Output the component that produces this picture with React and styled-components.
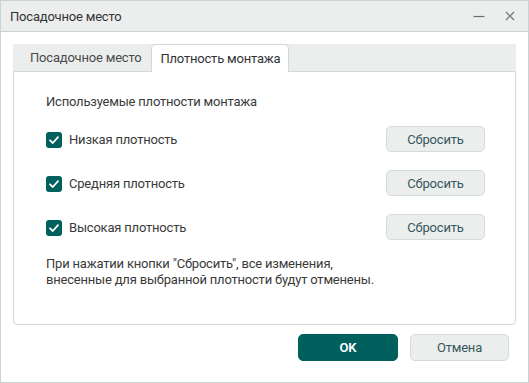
import styled, { createGlobalStyle } from "styled-components";

const GlobalStyle = createGlobalStyle`
  html, body {
    margin: 0;
    padding: 0;
    background: #ffffff;
  }
  * {
    box-sizing: border-box;
  }
`;

const Window = styled.div`
  display: flex;
  flex-direction: column;
  width: 529px;
  height: 383px;
  border: 1px solid #c9d3d3;
  background: #ffffff;
  font-family: Roboto, "Noto Sans", sans-serif;
  font-size: 13px;
  letter-spacing: -0.2px;
  color: #3a3a3a;
`;

const TitleBar = styled.div`
  display: flex;
  justify-content: space-between;
  align-items: center;
  height: 31px;
  padding: 0 13px 0 9px;
  background: #eceeee;
  border-bottom: 1px solid #c9d3d3;
  color: #333333;
`;

const TitleButtons = styled.div`
  display: flex;
  align-items: center;
  gap: 20px;
  color: #6b6f6f;
`;

const Body = styled.div`
  display: flex;
  flex-direction: column;
  padding: 12px 12px 0 12px;
`;

const TabStrip = styled.div`
  display: flex;
  align-items: flex-end;
  height: 27px;
  padding-left: 8px;
  background: #eceeee;
`;

const Tab = styled.div`
  display: flex;
  align-items: center;
  height: ${(p) => (p.$active ? "28px" : "27px")};
  padding: 0 8px 1px 8px;
  margin-right: 1px;
  margin-bottom: ${(p) => (p.$active ? "-1px" : "0")};
  position: relative;
  z-index: 1;
  background: ${(p) => (p.$active ? "#ffffff" : "transparent")};
  border: 1px solid ${(p) => (p.$active ? "#d0d8d8" : "transparent")};
  border-bottom: none;
  border-radius: 5px 5px 0 0;
  color: ${(p) => (p.$active ? "#333333" : "#4a4a4a")};
`;

const Panel = styled.div`
  display: flex;
  flex-direction: column;
  height: 254px;
  padding: 22px 30px 0 32px;
  border: 1px solid #d0d8d8;
  border-radius: 0 0 4px 4px;
`;

const Heading = styled.div`
  line-height: 16px;
  margin-bottom: 16px;
`;

const Rows = styled.div`
  display: flex;
  flex-direction: column;
  gap: 18px;
`;

const Row = styled.div`
  display: flex;
  justify-content: space-between;
  align-items: center;
  height: 26px;
`;

const CheckLabel = styled.label`
  display: flex;
  align-items: center;
  gap: 7px;
  margin-top: 1px;
`;

const Box = styled.span`
  display: flex;
  align-items: center;
  justify-content: center;
  width: 16px;
  height: 16px;
  border-radius: 3px;
  background: #00605e;
`;

const Button = styled.button`
  display: flex;
  align-items: center;
  justify-content: center;
  width: ${(p) => p.$w || 99}px;
  height: ${(p) => p.$h || 26}px;
  padding: 0;
  border-radius: 5px;
  font-family: Roboto, "Noto Sans", sans-serif;
  font-size: 13px;
  letter-spacing: -0.2px;
  font-weight: ${(p) => (p.$primary ? 600 : 400)};
  background: ${(p) => (p.$primary ? "#00605e" : "#eceeee")};
  border: 1px solid ${(p) => (p.$primary ? "#00605e" : "#d3dbdb")};
  color: ${(p) => (p.$primary ? "#ffffff" : "#35585c")};
`;

const Note = styled.div`
  margin-top: 16px;
  line-height: 16px;
`;

const Footer = styled.div`
  display: flex;
  justify-content: flex-end;
  gap: 12px;
  padding: 9px 7px 0 0;
`;

function Check() {
  return (
    <Box>
      <svg width="12" height="12" viewBox="0 0 12 12">
        <path d="M2 6.3 L4.8 9 L10 3.2" fill="none" stroke="#ffffff" strokeWidth="1.8" strokeLinecap="round" strokeLinejoin="round" />
      </svg>
    </Box>
  );
}

const densities = ["Низкая плотность", "Средняя плотность", "Высокая плотность"];

export default function App() {
  return (
    <>
      <GlobalStyle />
      <Window>
        <TitleBar>
          <span>Посадочное место</span>
          <TitleButtons>
            <svg width="12" height="12" viewBox="0 0 12 12">
              <path d="M0.5 6.5 H11.5" stroke="#6b6f6f" strokeWidth="1.2" />
            </svg>
            <svg width="10" height="10" viewBox="0 0 10 10">
              <path d="M1 1 L9 9 M9 1 L1 9" stroke="#6b6f6f" strokeWidth="1.2" />
            </svg>
          </TitleButtons>
        </TitleBar>
        <Body>
          <TabStrip>
            <Tab>Посадочное место</Tab>
            <Tab $active>Плотность монтажа</Tab>
          </TabStrip>
          <Panel>
            <Heading>Используемые плотности монтажа</Heading>
            <Rows>
              {densities.map((d) => (
                <Row key={d}>
                  <CheckLabel>
                    <Check />
                    {d}
                  </CheckLabel>
                  <Button>Сбросить</Button>
                </Row>
              ))}
            </Rows>
            <Note>
              При нажатии кнопки "Сбросить", все изменения,
              <br />
              внесенные для выбранной плотности будут отменены.
            </Note>
          </Panel>
          <Footer>
            <Button $primary $w={100} $h={27}>OK</Button>
            <Button $w={99} $h={27}>Отмена</Button>
          </Footer>
        </Body>
      </Window>
    </>
  );
}
